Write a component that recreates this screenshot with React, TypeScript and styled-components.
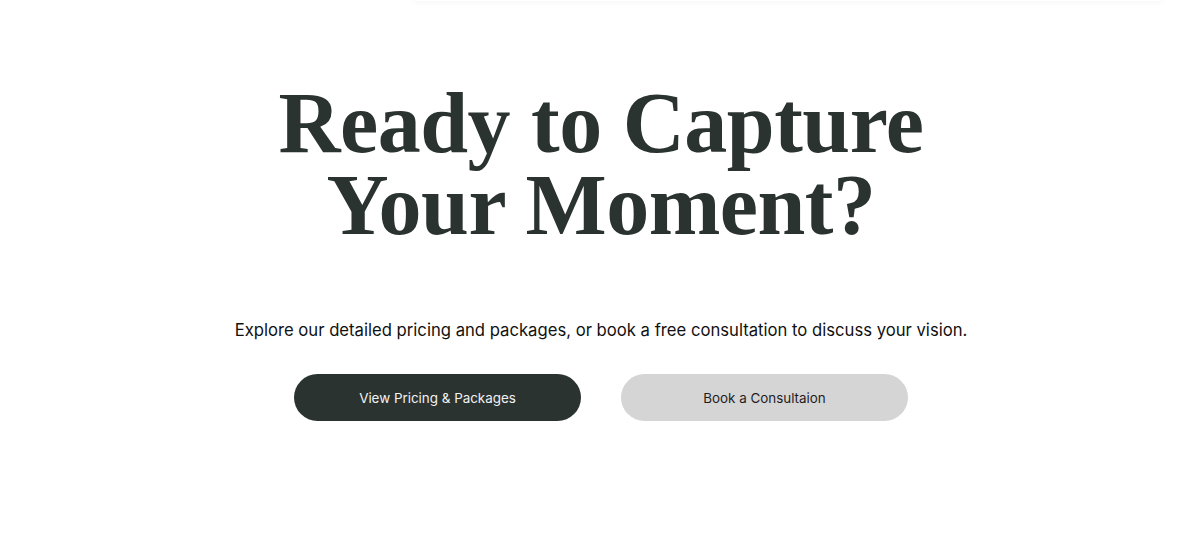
import React from "react";
import styled, { createGlobalStyle } from "styled-components";

const GlobalStyle = createGlobalStyle`
  html, body {
    margin: 0;
    padding: 0;
    background: #ffffff;
  }
  body {
    font-family: Inter, "Noto Sans", Arial, sans-serif;
    overflow: hidden;
  }
`;

const Page = styled.div`
  width: 1198px;
  height: 540px;
  background: #ffffff;
  display: flex;
  flex-direction: column;
  align-items: center;
`;

const NavEdge = styled.div`
  align-self: flex-start;
  margin-left: 414px;
  width: 748px;
  height: 1px;
  background: #ffffff;
  box-shadow: 0 1px 5px rgba(0, 0, 0, 0.14);
  border-radius: 0 0 12px 12px;
`;

const Section = styled.section`
  display: flex;
  flex-direction: column;
  align-items: center;
  padding-top: 81px;
  padding-left: 4px;
`;

const Heading = styled.h1`
  margin: 0;
  font-family: "Liberation Serif", "Times New Roman", serif;
  font-weight: 700;
  font-size: 86px;
  line-height: 82px;
  color: #2b3331;
  text-align: center;
  letter-spacing: -0.5px;
`;

const Lead = styled.p`
  margin: 72px 0 0;
  font-family: Inter, "Noto Sans", sans-serif;
  font-size: 16.66px;
  line-height: 24px;
  color: #111111;
  text-align: center;
`;

const Actions = styled.div`
  display: flex;
  gap: 40px;
  margin-top: 32px;
`;

const Button = styled.button<{ $variant: "dark" | "light" }>`
  width: 287px;
  height: 47px;
  border: none;
  border-radius: 999px;
  font-family: Inter, "Noto Sans", sans-serif;
  font-size: 13.4px;
  font-weight: 400;
  cursor: pointer;
  background: ${(p) => (p.$variant === "dark" ? "#2b3331" : "#d6d5d5")};
  color: ${(p) => (p.$variant === "dark" ? "#f2f2f2" : "#1e1e1e")};
`;

export default function App() {
  return (
    <>
      <GlobalStyle />
      <Page>
        <NavEdge />
        <Section>
          <Heading>
            Ready to Capture
            <br />
            Your Moment?
          </Heading>
          <Lead>
            Explore our detailed pricing and packages, or book a free consultation to discuss your vision.
          </Lead>
          <Actions>
            <Button $variant="dark">View Pricing &amp; Packages</Button>
            <Button $variant="light">Book a Consultaion</Button>
          </Actions>
        </Section>
      </Page>
    </>
  );
}
